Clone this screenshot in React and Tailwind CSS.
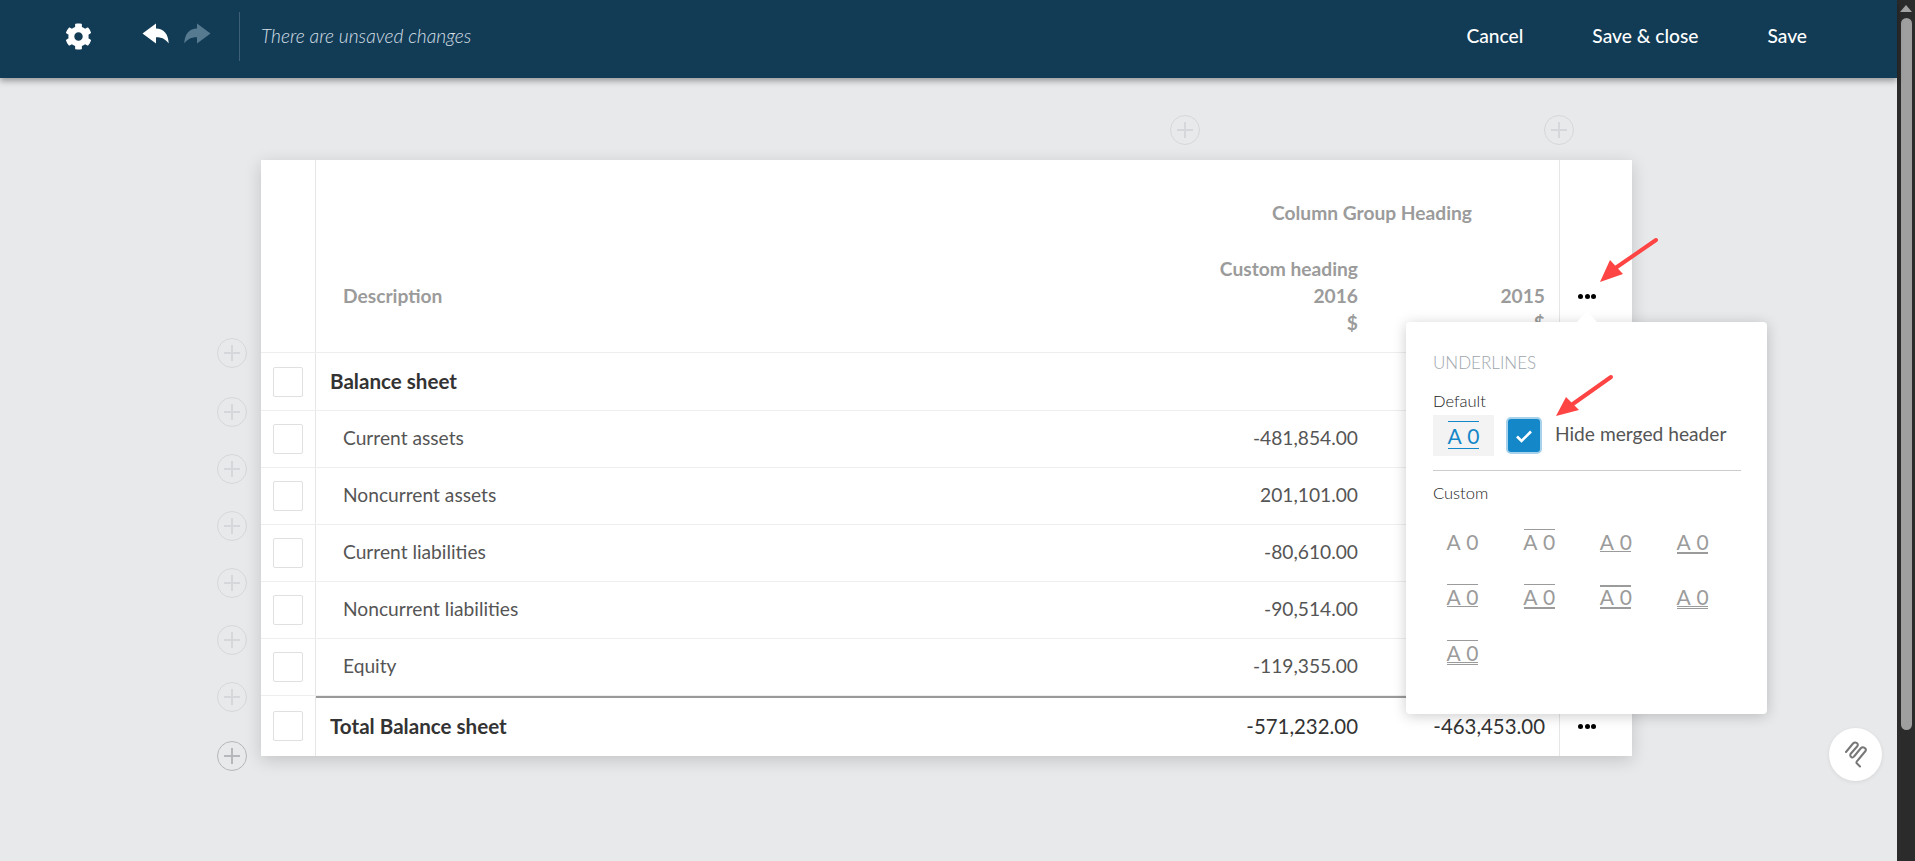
import React from 'react';
import { FaCog } from 'react-icons/fa';

const ROWS = [
  { label: 'Current assets', v2016: '-481,854.00' },
  { label: 'Noncurrent assets', v2016: '201,101.00' },
  { label: 'Current liabilities', v2016: '-80,610.00' },
  { label: 'Noncurrent liabilities', v2016: '-90,514.00' },
  { label: 'Equity', v2016: '-119,355.00' },
];

const UNDERLINES = [
  { top: null, bottom: null },
  { top: 'thin', bottom: null },
  { top: null, bottom: 'thin' },
  { top: null, bottom: 'thick' },
  { top: 'thin', bottom: 'thin' },
  { top: 'thin', bottom: 'thick' },
  { top: 'thick', bottom: 'thick' },
  { top: null, bottom: 'double' },
  { top: 'thin', bottom: 'double' },
];

function Plus({ dark }) {
  return (
    <div className={`flex h-[30px] w-[30px] shrink-0 items-center justify-center rounded-full border ${dark ? 'border-[#b5b7ba]' : 'border-[#d6d7da]'}`}>
      <svg width="18" height="18" viewBox="0 0 18 18">
        <path d="M9 1v16M1 9h16" stroke={dark ? '#b5b7ba' : '#d6d7da'} strokeWidth="2" />
      </svg>
    </div>
  );
}

function Dots() {
  return (
    <div className="flex gap-[1.5px]">
      <span className="h-[5px] w-[5px] rounded-full bg-black" />
      <span className="h-[5px] w-[5px] rounded-full bg-black" />
      <span className="h-[5px] w-[5px] rounded-full bg-black" />
    </div>
  );
}

function Line({ type, color }) {
  if (!type) return <div className="h-[3px]" />;
  if (type === 'double') {
    return <div className={`h-[3px] w-full border-y ${color}`} />;
  }
  return <div className={`w-full ${type === 'thick' ? 'h-[2px] mt-[1px] border-t-2' : 'h-[3px] border-t'} ${color}`} />;
}

function Sample({ top, bottom, active }) {
  const lineColor = active ? 'border-[#1487c8]' : 'border-[#9b9b9b]';
  return (
    <div className={`flex w-[31px] flex-col items-center ${active ? 'text-[#1487c8]' : 'text-[#9b9b9b]'}`}>
      <Line type={top} color={lineColor} />
      <div className={`whitespace-nowrap text-[21px] [word-spacing:1px] ${active ? 'h-[24px] leading-[24px]' : 'h-[19px] leading-[19px]'}`}>A 0</div>
      <Line type={bottom} color={lineColor} />
    </div>
  );
}

function Check() {
  return <div className="h-[30px] w-[30px] rounded-[2px] border border-[#e0e0e0] bg-white" />;
}

function Row({ label, v2016, v2015, total, indent, dots, first, last }) {
  const height = total ? 'h-[60px]' : first ? 'h-[58px]' : 'h-[57px]';
  const numbers = total ? 'text-[20.4px] text-[#333333]' : 'text-[19.2px] text-[#555555]';
  return (
    <div className={`flex ${height} ${last ? '' : 'border-b border-[#eeeeee]'}`}>
      <div className="flex w-[55px] shrink-0 items-center justify-center border-r border-[#e6e6e6]">
        <Check />
      </div>
      <div className={`flex flex-1 items-center ${total ? 'border-t-2 border-[#999999] pb-[2px]' : 'pb-[1px]'}`}>
        <div className={`flex-1 ${indent ? 'pl-[27px] text-[19.2px] text-[#555555]' : 'pl-[14px] text-[20.6px] font-bold text-[#333333]'}`}>{label}</div>
        <div className={`w-[187px] text-right ${numbers}`}>{v2016}</div>
        <div className={`w-[187px] text-right ${numbers}`}>{v2015}</div>
        <div className="w-[14px]" />
      </div>
      <div className="flex w-[73px] shrink-0 items-center justify-center border-l border-[#e6e6e6] pr-[18px]">
        {dots && <Dots />}
      </div>
    </div>
  );
}

function Arrow({ className, width, height, d, head }) {
  return (
    <svg className={className} width={width} height={height} viewBox={`0 0 ${width} ${height}`}>
      <path d={d} stroke="#ff4444" strokeWidth="4" strokeLinecap="round" fill="none" />
      <polygon points={head} fill="#ff4444" />
    </svg>
  );
}

function ReplyIcon({ className, flip }) {
  return (
    <svg className={className} width="27" height="21" viewBox="0 0 27 21" style={flip ? { transform: 'scaleX(-1)' } : undefined}>
      <path d="M0.5 10.5L14 0.5V5.5C21.5 5.5 26.5 11 26.7 20.5C23.5 16 19.5 14 14 14.2V20.5Z" fill="currentColor" />
    </svg>
  );
}

export default function App() {
  return (
    <div className="flex h-[861px] w-full overflow-hidden bg-[#e8e9eb] font-['Lato',sans-serif]">
      <div className="relative flex min-w-0 flex-1 flex-col">
        <header className="z-10 flex h-[78px] shrink-0 items-center bg-[#123c56] pb-[6px] pl-[65px] pr-[90px] shadow-[0_3px_6px_rgba(0,0,0,0.35)]">
          <FaCog className="text-[27px] text-white" />
          <ReplyIcon className="mb-[5px] ml-[50px] text-white" />
          <ReplyIcon className="mb-[5px] ml-[15px] text-[#567a90]" flip />
          <div className="ml-[28px] h-[49px] w-px bg-[#3d6077]" />
          <div className="ml-[21px] text-[19.2px] font-light italic text-[#d5dfe5]">There are unsaved changes</div>
          <div className="ml-auto flex gap-[69px] text-[19.2px] font-medium text-white">
            <span>Cancel</span>
            <span>Save &amp; close</span>
            <span>Save</span>
          </div>
        </header>

        <div className="relative flex-1">
          <div className="ml-[1170px] mt-[37px] flex h-[45px] gap-[344px]">
            <Plus />
            <Plus />
          </div>

          <div className="flex">
            <div className="ml-[217px] mr-[14px] flex w-[30px] flex-col pt-[178px]">
              <div className="h-[59px]"><Plus /></div>
              {[1, 2, 3, 4, 5, 6].map((i) => (
                <div key={i} className="h-[57px]"><Plus /></div>
              ))}
              <div className="mt-[2px]"><Plus dark /></div>
            </div>

            <div className="h-[596px] w-[1371px] bg-white shadow-[0_4px_16px_rgba(0,0,0,0.16)]">
              <div className="flex h-[193px] border-b border-[#eeeeee]">
                <div className="w-[55px] shrink-0 border-r border-[#e6e6e6]" />
                <div className="flex flex-1 flex-col text-[19.2px] font-bold leading-[27px] text-[#9b9b9b]">
                  <div className="mt-[39px] pr-[87px] text-right">Column Group Heading</div>
                  <div className="mt-[29px] flex items-end">
                    <div className="flex-1 pb-[27px] pl-[27px]">Description</div>
                    <div className="w-[187px] text-right">
                      <div>Custom heading</div>
                      <div>2016</div>
                      <div>$</div>
                    </div>
                    <div className="w-[187px] text-right">
                      <div>2015</div>
                      <div>$</div>
                    </div>
                    <div className="w-[14px]" />
                  </div>
                </div>
                <div className="flex w-[73px] shrink-0 items-start justify-center border-l border-[#e6e6e6] pr-[18px] pt-[134px]">
                  <Dots />
                </div>
              </div>
              <Row label="Balance sheet" first />
              {ROWS.map((r) => (
                <Row key={r.label} label={r.label} v2016={r.v2016} indent />
              ))}
              <Row label="Total Balance sheet" v2016="-571,232.00" v2015="-463,453.00" total dots last />
            </div>
          </div>

          <div className="absolute left-[1406px] top-[244px] h-[392px] w-[361px] rounded-[4px] bg-white px-[27px] pt-[32px] shadow-[0_2px_14px_rgba(0,0,0,0.2)]">
            <div className="absolute left-[171px] top-[-11px] h-0 w-0 border-x-[10px] border-b-[11px] border-x-transparent border-b-white" />
            <div className="text-[17px] font-light leading-[18px] text-[#9ea6ad]">UNDERLINES</div>
            <div className="mt-[20px] text-[16.5px] font-light leading-[18px] text-[#222222]">Default</div>
            <div className="mt-[5px] flex items-center">
              <div className="flex h-[41px] w-[61px] items-center justify-center bg-[#f3f3f3]">
                <Sample top="thin" bottom="thin" active />
              </div>
              <div className="ml-[12px] flex h-[37px] w-[36px] items-center justify-center rounded-[5px] border-2 border-[#a6d2ec] bg-[#1487c8]">
                <svg width="18" height="14" viewBox="0 0 18 14">
                  <path d="M2 7.5l4.5 4.5L16 2.5" stroke="white" strokeWidth="2.6" fill="none" />
                </svg>
              </div>
              <div className="ml-[13px] pb-[3px] text-[19.2px] text-[#555555]">Hide merged header</div>
            </div>
            <div className="mr-[-1px] mt-[14px] h-px bg-[#cccccc]" />
            <div className="mt-[13px] text-[16.5px] font-light leading-[18px] text-[#222222]">Custom</div>
            <div className="mt-[27px] grid grid-cols-[repeat(4,76.7px)] gap-y-[30.4px] pl-[14px]">
              {UNDERLINES.map((u, i) => (
                <Sample key={i} top={u.top} bottom={u.bottom} />
              ))}
            </div>
          </div>

          <Arrow className="absolute left-[1590px] top-[154px]" width={75} height={60} d="M66 8L24 37" head="10,50 20,28 33,42" />
          <Arrow className="absolute left-[1546px] top-[290px]" width={75} height={60} d="M65 9L24 38" head="10,48 20,29 33,42" />

          <div className="absolute left-[1829px] top-[650px] flex h-[53px] w-[53px] items-center justify-center rounded-full bg-white shadow-[0_1px_4px_rgba(0,0,0,0.08)]">
            <svg width="24" height="27" viewBox="0 0 24 27" fill="none" stroke="#777777" strokeWidth="2" strokeLinejoin="round" strokeLinecap="round">
              <path d="M2 11L9 2.5C11 0.5 15 2 13.5 5L6.5 13C5.5 16 8.5 17.5 10 15.5L17 7C19 5 23 7.5 21.5 10L14 19C13 20 12 21 12.5 22L16 25.5" />
            </svg>
          </div>
        </div>
      </div>

      <div className="flex w-[18px] shrink-0 flex-col items-center bg-[#2b2b2b]">
        <div className="mt-[5px] h-0 w-0 border-x-[6px] border-b-[7px] border-x-transparent border-b-[#a3a3a3]" />
        <div className="mt-[6px] h-[712px] w-[11px] rounded-full bg-[#9f9f9f]" />
      </div>
    </div>
  );
}
